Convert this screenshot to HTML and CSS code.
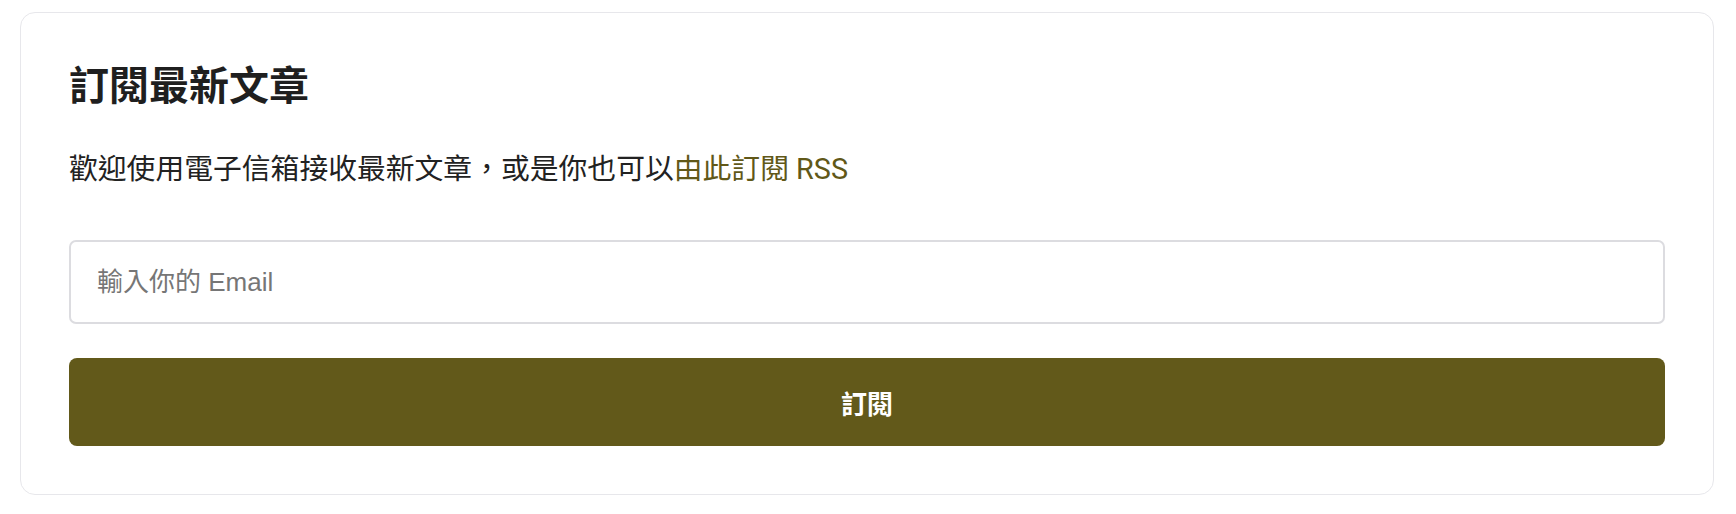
FILE: index.html
```html
<!DOCTYPE html>
<html lang="zh-Hant">
<head>
<meta charset="utf-8">
<title>訂閱最新文章</title>
<link rel="stylesheet" href="styles.css">
</head>
<body>
  <section class="card">
    <h2 class="card-title">訂閱最新文章</h2>
    <p class="card-desc">歡迎使用電子信箱接收最新文章，或是你也可以<a class="rss-link" href="#">由此訂閱 RSS</a></p>
    <form class="subscribe-form">
      <input class="email-input" type="email" placeholder="輸入你的 Email">
      <button class="subscribe-btn" type="button">訂閱</button>
    </form>
  </section>
</body>
</html>
```

FILE: styles.css
```css
html, body {
  margin: 0;
  background: #ffffff;
}

body {
  padding: 12px 22px 0 20px;
  font-family: Roboto, "Noto Sans CJK TC", sans-serif;
  color: #222222;
}

.card {
  border: 1px solid #e7e7eb;
  border-radius: 15px;
  padding: 48px;
  background: #ffffff;
}

.card-title {
  margin: 0;
  font-size: 40px;
  line-height: 52px;
  font-weight: 700;
  color: #1f1f1f;
}

.card-desc {
  margin: 36px 0 0;
  font-size: 28.8px;
  line-height: 40px;
  color: #222222;
}

.rss-link {
  color: #615818;
  text-decoration: none;
}

.subscribe-form {
  margin-top: 51px;
  display: flex;
  flex-direction: column;
  gap: 34px;
}

.email-input {
  box-sizing: border-box;
  height: 84px;
  width: 100%;
  margin: 0;
  padding: 0 26px;
  border: 2px solid #dcdce0;
  border-radius: 7px;
  font-family: "Liberation Sans", "Noto Sans CJK TC", sans-serif;
  font-size: 26px;
  color: #222222;
  background: #ffffff;
  outline: none;
}

.email-input::placeholder {
  color: #767676;
}

.subscribe-btn {
  box-sizing: border-box;
  height: 88px;
  width: 100%;
  margin: 0;
  border: none;
  border-radius: 8px;
  background: #62591a;
  color: #ffffff;
  font-family: Roboto, "Noto Sans CJK TC", sans-serif;
  font-size: 26px;
  font-weight: 700;
  cursor: pointer;
}
```
